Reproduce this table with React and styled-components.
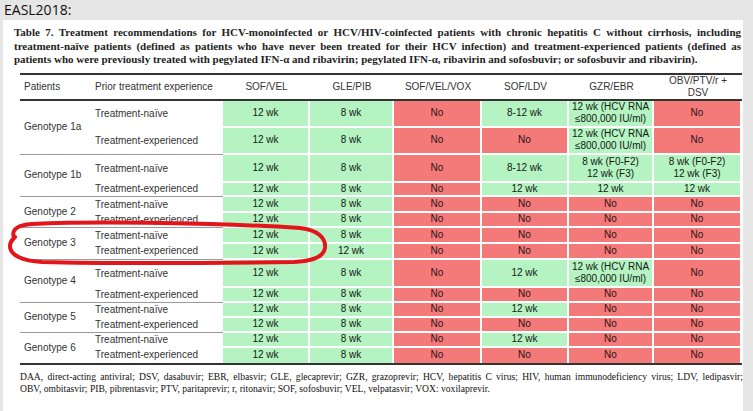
import React from "react";
import styled, { createGlobalStyle } from "styled-components";

const GlobalStyle = createGlobalStyle`
  html, body { margin: 0; padding: 0; background: #e6e6e6; }
  * { box-sizing: border-box; }
`;

const Page = styled.div`
  position: relative;
  width: 753px;
  height: 411px;
  overflow: hidden;
  background: #e6e6e6;
`;

const Caption = styled.div`
  height: 20px;
  padding-left: 4px;
  font-family: "Open Sans", "Noto Sans", sans-serif;
  font-size: 14px;
  line-height: 20px;
  color: #111;
`;

const Panel = styled.div`
  margin-left: 3px;
  width: 740px;
  height: 391px;
  background: #fff;
  padding-top: 6px;
`;

const Title = styled.div`
  margin-left: 11px;
  width: 727px;
  font-family: "Liberation Serif", "Times New Roman", serif;
  font-weight: 700;
  font-size: 11px;
  line-height: 13.5px;
  color: #1e1e1e;
`;

const Line = styled.span`
  display: block;
  white-space: nowrap;
  text-align: ${(p) => (p.$justify ? "justify" : "left")};
  text-align-last: ${(p) => (p.$justify ? "justify" : "left")};
`;

const TableWrap = styled.div`
  margin: 6px 0 0 17px;
  width: 722px;
`;

const Table = styled.table`
  width: 722px;
  table-layout: fixed;
  border-collapse: separate;
  border-spacing: 0;
  border-bottom: 2px solid #333;
  font-family: "Liberation Sans", Arial, sans-serif;
`;

const Head = styled.th`
  border-top: 2px solid #333;
  border-bottom: 2px solid #333;
  padding: 0 0 0 ${(p) => p.$pad || 0}px;
  font-weight: 400;
  font-size: 10px;
  line-height: 12px;
  color: #333;
  text-align: ${(p) => (p.$left ? "left" : "center")};
  vertical-align: middle;
`;

const Row = styled.tr`
  height: ${(p) => p.$h}px;
  &:last-child td { border-bottom: 0; }
`;

const Label = styled.td`
  padding: 0 0 0 ${(p) => p.$pad}px;
  font-size: 10px;
  line-height: 12px;
  color: #333;
  text-align: left;
  vertical-align: middle;
  white-space: nowrap;
  border-bottom: ${(p) => (p.$end ? "1px solid #9a9a9a" : "0")};
`;

const Cell = styled.td`
  padding: 0;
  background: ${(p) => (p.$tone === "no" ? "#f47a7a" : "#b6f3c3")};
  border-right: 2px solid #fff;
  border-bottom: 2px solid #fff;
  font-size: 10px;
  line-height: 12px;
  color: ${(p) => (p.$tone === "no" ? "#2a1414" : "#101a10")};
  text-align: center;
  vertical-align: middle;
  white-space: nowrap;
`;

const Footer = styled.div`
  margin: 6px 0 0 17px;
  width: 723px;
  font-family: "Liberation Serif", "Times New Roman", serif;
  font-size: 9.6px;
  line-height: 12px;
  color: #111;
`;

const Overlay = styled.svg`
  position: absolute;
  left: 0;
  top: 0;
  pointer-events: none;
`;

const HCV = ["12 wk (HCV RNA", "\u2264800,000 IU/ml)"];
const F = ["8 wk (F0-F2)", "12 wk (F3)"];
const N = "No";

const rows = [
  { geno: "Genotype 1a", prior: "Treatment-naïve", h: 27, cells: ["12 wk", "8 wk", N, "8-12 wk", HCV, N] },
  { prior: "Treatment-experienced", h: 27, end: true, cells: ["12 wk", "8 wk", N, N, HCV, N] },
  { geno: "Genotype 1b", prior: "Treatment-naïve", h: 28, cells: ["12 wk", "8 wk", N, "8-12 wk", F, F] },
  { prior: "Treatment-experienced", h: 14, end: true, cells: ["12 wk", "8 wk", N, "12 wk", "12 wk", "12 wk"] },
  { geno: "Genotype 2", prior: "Treatment-naïve", h: 16, cells: ["12 wk", "8 wk", N, N, N, N] },
  { prior: "Treatment-experienced", h: 15, end: true, cells: ["12 wk", "8 wk", N, N, N, N] },
  { geno: "Genotype 3", prior: "Treatment-naïve", h: 16, cells: ["12 wk", "8 wk", N, N, N, N] },
  { prior: "Treatment-experienced", h: 16, end: true, cells: ["12 wk", "12 wk", N, N, N, N] },
  { geno: "Genotype 4", prior: "Treatment-naïve", h: 28, cells: ["12 wk", "8 wk", N, "12 wk", HCV, N] },
  { prior: "Treatment-experienced", h: 15, end: true, cells: ["12 wk", "8 wk", N, N, N, N] },
  { geno: "Genotype 5", prior: "Treatment-naïve", h: 15, cells: ["12 wk", "8 wk", N, "12 wk", N, N] },
  { prior: "Treatment-experienced", h: 15, end: true, cells: ["12 wk", "8 wk", N, N, N, N] },
  { geno: "Genotype 6", prior: "Treatment-naïve", h: 15, cells: ["12 wk", "8 wk", N, "12 wk", N, N] },
  { prior: "Treatment-experienced", h: 15, cells: ["12 wk", "8 wk", N, N, N, N] },
];

const cols = [72, 131, 87, 84, 88, 87, 85, 88];

function renderValue(v) {
  if (Array.isArray(v)) {
    return (
      <>
        {v[0]}
        <br />
        {v[1]}
      </>
    );
  }
  return v;
}

export default function App() {
  return (
    <Page>
      <GlobalStyle />
      <Caption>EASL2018:</Caption>
      <Panel>
        <Title>
          <Line $justify>
            Table 7. Treatment recommendations for HCV-monoinfected or HCV/HIV-coinfected patients with chronic hepatitis C without cirrhosis, including
          </Line>
          <Line $justify>
            treatment-naïve patients (defined as patients who have never been treated for their HCV infection) and treatment-experienced patients (defined as
          </Line>
          <Line>
            patients who were previously treated with pegylated IFN-α and ribavirin; pegylated IFN-α, ribavirin and sofosbuvir; or sofosbuvir and ribavirin).
          </Line>
        </Title>
        <TableWrap>
          <Table>
            <colgroup>
              {cols.map((w, i) => (
                <col key={i} style={{ width: w }} />
              ))}
            </colgroup>
            <thead>
              <Row $h={27}>
                <Head $left $pad={4}>Patients</Head>
                <Head $left $pad={3}>Prior treatment experience</Head>
                <Head>SOF/VEL</Head>
                <Head>GLE/PIB</Head>
                <Head>SOF/VEL/VOX</Head>
                <Head>SOF/LDV</Head>
                <Head>GZR/EBR</Head>
                <Head>
                  OBV/PTV/r +
                  <br />
                  DSV
                </Head>
              </Row>
            </thead>
            <tbody>
              {rows.map((r, i) => (
                <Row key={i} $h={r.h}>
                  {r.geno && (
                    <Label rowSpan={2} $pad={4} $end={i < rows.length - 2}>
                      {r.geno}
                    </Label>
                  )}
                  <Label $pad={3} $end={r.end}>
                    {r.prior}
                  </Label>
                  {r.cells.map((c, j) => (
                    <Cell key={j} $tone={c === N ? "no" : "yes"}>
                      {renderValue(c)}
                    </Cell>
                  ))}
                </Row>
              ))}
            </tbody>
          </Table>
        </TableWrap>
        <Footer>
          <Line $justify>
            DAA, direct-acting antiviral; DSV, dasabuvir; EBR, elbasvir; GLE, glecaprevir; GZR, grazoprevir; HCV, hepatitis C virus; HIV, human immunodeficiency virus; LDV, ledipasvir;
          </Line>
          <Line>
            OBV, ombitasvir; PIB, pibrentasvir; PTV, paritaprevir; r, ritonavir; SOF, sofosbuvir; VEL, velpatasvir; VOX: voxilaprevir.
          </Line>
        </Footer>
      </Panel>
      <Overlay width="753" height="411" viewBox="0 0 753 411">
        <path
          d="M 14 238 C 11 229, 18 225, 32 224 C 100 221, 220 223, 300 228 C 318 230, 326 238, 325 248 C 324 256, 314 261, 294 262 C 220 263, 120 264, 42 262 C 22 261, 10 255, 10 246 C 10 242, 12 240, 15 237"
          fill="none"
          stroke="#e3141a"
          strokeWidth="4"
          strokeLinecap="round"
          strokeLinejoin="round"
        />
      </Overlay>
    </Page>
  );
}
